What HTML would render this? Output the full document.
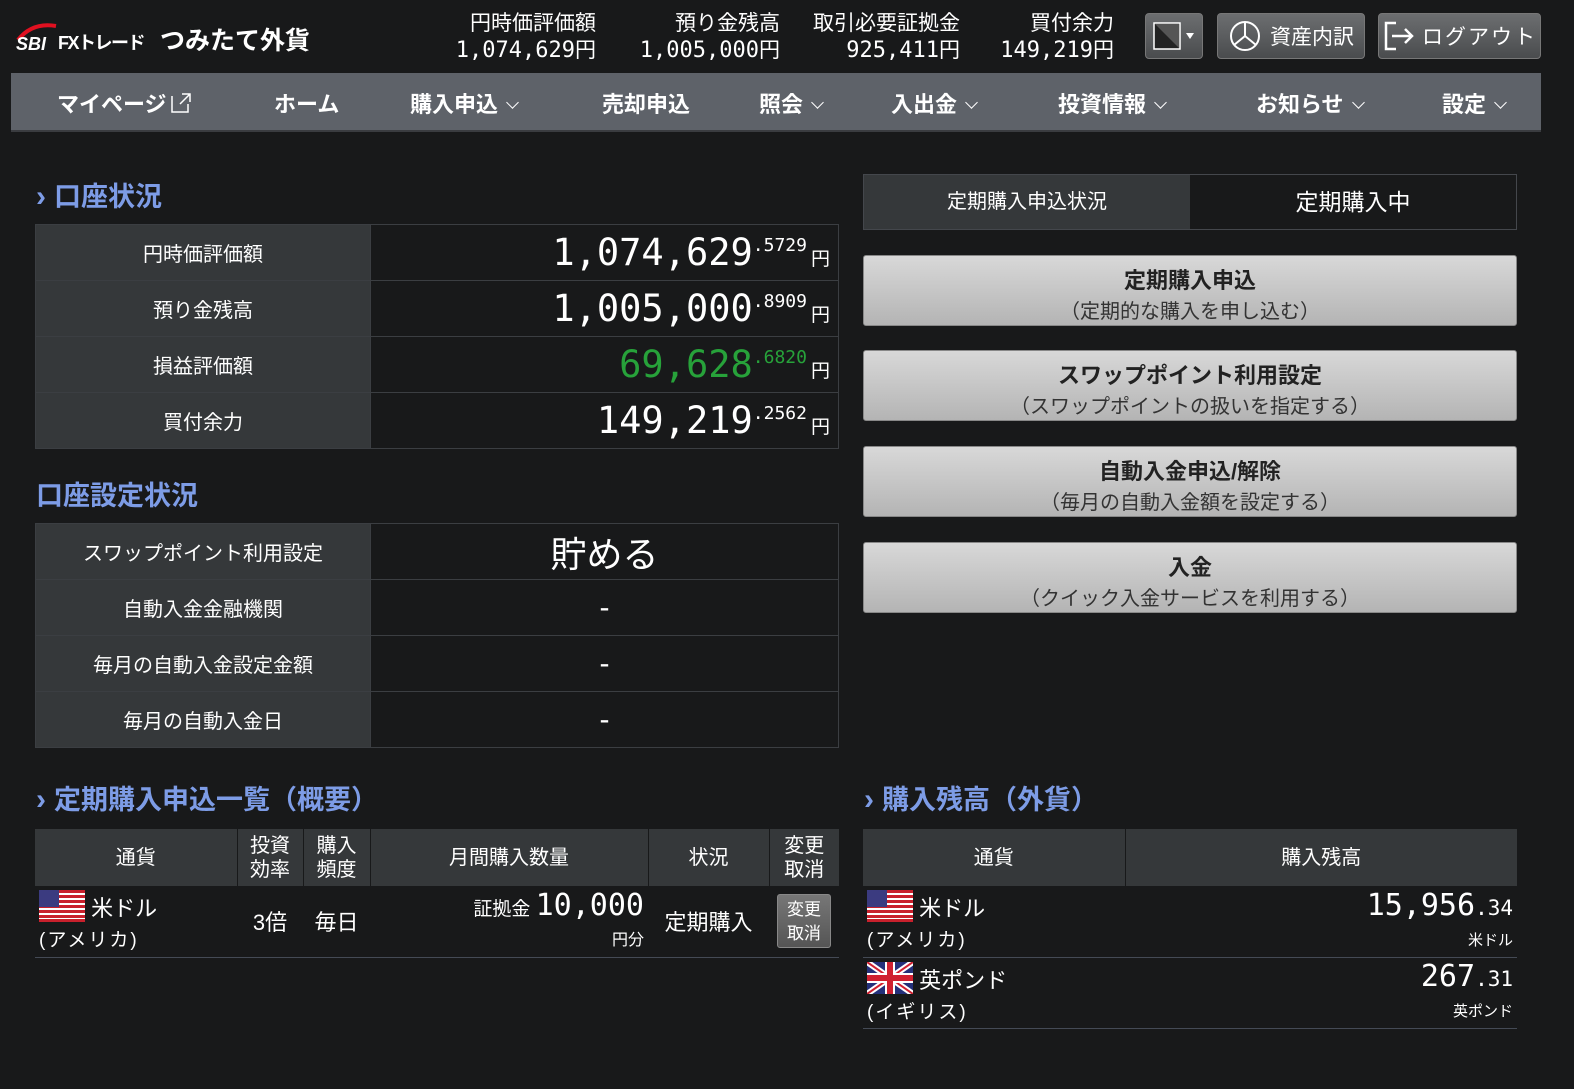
<!DOCTYPE html>
<html><head><meta charset="utf-8">
<style>
*{margin:0;padding:0;box-sizing:border-box}
body{width:1574px;height:1089px;background:#18191a;color:#fff;font-family:"Liberation Sans","Noto Sans CJK JP",sans-serif;position:relative;overflow:hidden}
.a{position:absolute}
.mono{font-family:"DejaVu Sans Mono","Noto Sans CJK JP",monospace}
.hs{text-align:right;font-size:21px;line-height:27px}
.hs .n{font-family:"DejaVu Sans Mono","Noto Sans CJK JP",monospace;font-size:22px}
.btn{background:linear-gradient(#6c6e70,#4a4c4e);border:1px solid #777;border-radius:4px;display:flex;align-items:center;justify-content:center;font-size:21px;color:#fff}
.nav{left:11px;top:73px;width:1530px;height:59px;background:#5e6269;border-bottom:2px solid #3a3c40}
.nav span{position:absolute;top:14px;font-size:22px;font-weight:bold;white-space:nowrap}
.chev{display:inline-block;width:9px;height:9px;border-right:1.5px solid #fff;border-bottom:1.5px solid #fff;transform:rotate(45deg);margin-left:10px;position:relative;top:-5px}
.h2{color:#7d9ce6;font-size:27px;font-weight:bold}
.h2 .g{font-weight:bold;margin-right:8px;font-size:30px}
table{border-collapse:collapse}
.kv{left:35px;width:804px}
.kv td{height:56px;border:1px solid #3b3e42}
.kv td.l{width:335px;background:#35383a;text-align:center;font-size:20px}
.kv td.v{background:#18191a;text-align:right;padding-right:8px;white-space:nowrap}
.big{font-family:"DejaVu Sans Mono",monospace;font-size:37px}
.sup{font-family:"DejaVu Sans Mono",monospace;font-size:18px;vertical-align:14px}
.yen{font-size:19px;margin-left:4px}
.gb{background:linear-gradient(#d8d8d8,#b4b4b4);border:1px solid #888;border-radius:3px;color:#222;text-align:center;left:863px;width:654px;height:71px}
.gb b{display:block;font-size:22px;margin-top:7px}
.gb i{display:block;font-style:normal;font-size:20px;color:#333}
.tb th{background:#35383a;font-weight:normal;font-size:20px;line-height:24px;border-right:1px solid #18191a;height:57px}
.tb td{border-bottom:1px solid #444a55;font-size:22px}
</style></head><body>

<div class="a" style="left:12px;top:20px;width:300px;height:36px">
<svg width="60" height="36" style="position:absolute;left:0;top:0"><path d="M6 20 Q20 2 44 6" stroke="#e01020" stroke-width="4" fill="none"/><text x="4" y="30" font-family="Liberation Sans" font-style="italic" font-weight="bold" font-size="18" fill="#fff">SBI</text></svg>
<span class="a" style="left:46px;top:9px;font-size:18px;font-weight:bold;letter-spacing:-1.5px">FXトレード</span>
<span class="a" style="left:148px;top:1px;font-size:25px;font-weight:bold">つみたて外貨</span>
</div>

<div class="a hs" style="left:430px;top:10px;width:166px">円時価評価額<br><span class="n">1,074,629</span>円</div>
<div class="a hs" style="left:610px;top:10px;width:170px">預り金残高<br><span class="n">1,005,000</span>円</div>
<div class="a hs" style="left:790px;top:10px;width:170px">取引必要証拠金<br><span class="n">925,411</span>円</div>
<div class="a hs" style="left:970px;top:10px;width:144px">買付余力<br><span class="n">149,219</span>円</div>

<div class="a btn" style="left:1145px;top:13px;width:58px;height:46px">
<svg width="44" height="32"><rect x="2" y="3" width="26" height="26" fill="#222" stroke="#fff" stroke-width="1.5"/><path d="M3 4 L27 28 L27 4Z" fill="#555"/><path d="M34 13 L42 13 L38 19Z" fill="#fff"/></svg></div>
<div class="a btn" style="left:1217px;top:13px;width:148px;height:46px">
<svg width="34" height="34" style="margin-right:8px"><circle cx="17" cy="17" r="14" fill="none" stroke="#fff" stroke-width="2"/><path d="M17 3 V17 L6 26 M17 17 L28 26" stroke="#fff" stroke-width="2" fill="none"/></svg>資産内訳</div>
<div class="a btn" style="left:1378px;top:13px;width:163px;height:46px;letter-spacing:2px">
<svg width="34" height="34" style="margin-right:6px"><path d="M14 4 H4 V30 H14" stroke="#fff" stroke-width="2.5" fill="none"/><path d="M10 17 H30 M23 10 L30 17 L23 24" stroke="#fff" stroke-width="2.5" fill="none"/></svg>ログアウト</div>

<div class="a nav">
<span style="left:46px">マイページ<svg width="22" height="22" style="margin-left:3px;vertical-align:-2px"><path d="M2 4 V20 H18 V12 M12 2 H20 V10 M20 2 L10 12" stroke="#fff" stroke-width="1.5" fill="none"/></svg></span>
<span style="left:263px">ホーム</span>
<span style="left:399px">購入申込<i class="chev"></i></span>
<span style="left:591px">売却申込</span>
<span style="left:748px">照会<i class="chev"></i></span>
<span style="left:880px">入出金<i class="chev"></i></span>
<span style="left:1047px">投資情報<i class="chev"></i></span>
<span style="left:1245px">お知らせ<i class="chev"></i></span>
<span style="left:1431px">設定<i class="chev"></i></span>
</div>

<div class="a h2" style="left:36px;top:175px"><span class="g">›</span>口座状況</div>
<table class="a kv" style="top:224px">
<tr><td class="l">円時価評価額</td><td class="v"><span class="big">1,074,629</span><span class="sup">.5729</span><span class="yen">円</span></td></tr>
<tr><td class="l">預り金残高</td><td class="v"><span class="big">1,005,000</span><span class="sup">.8909</span><span class="yen">円</span></td></tr>
<tr><td class="l">損益評価額</td><td class="v"><span class="big" style="color:#27a23a">69,628</span><span class="sup" style="color:#27a23a">.6820</span><span class="yen">円</span></td></tr>
<tr><td class="l">買付余力</td><td class="v"><span class="big">149,219</span><span class="sup">.2562</span><span class="yen">円</span></td></tr>
</table>

<div class="a h2" style="left:36px;top:474px">口座設定状況</div>
<table class="a kv" style="top:523px">
<tr><td class="l">スワップポイント利用設定</td><td class="v" style="text-align:center;font-size:36px;padding:0">貯める</td></tr>
<tr><td class="l">自動入金金融機関</td><td class="v" style="text-align:center;font-size:30px;padding:0">-</td></tr>
<tr><td class="l">毎月の自動入金設定金額</td><td class="v" style="text-align:center;font-size:30px;padding:0">-</td></tr>
<tr><td class="l">毎月の自動入金日</td><td class="v" style="text-align:center;font-size:30px;padding:0">-</td></tr>
</table>

<div class="a" style="left:863px;top:174px;width:654px;height:56px;border:1px solid #44474c;display:flex">
<div style="width:326px;background:#35383a;text-align:center;line-height:54px;font-size:20px">定期購入申込状況</div>
<div style="flex:1;text-align:center;line-height:54px;font-size:23px">定期購入中</div>
</div>
<div class="a gb" style="top:255px"><b>定期購入申込</b><i>（定期的な購入を申し込む）</i></div>
<div class="a gb" style="top:350px"><b>スワップポイント利用設定</b><i>（スワップポイントの扱いを指定する）</i></div>
<div class="a gb" style="top:446px"><b>自動入金申込/解除</b><i>（毎月の自動入金額を設定する）</i></div>
<div class="a gb" style="top:542px"><b>入金</b><i>（クイック入金サービスを利用する）</i></div>

<div class="a h2" style="left:36px;top:778px"><span class="g">›</span>定期購入申込一覧（概要）</div>
<table class="a tb" style="left:35px;top:829px;width:804px">
<tr><th style="width:202px">通貨</th><th style="width:66px">投資<br>効率</th><th style="width:67px">購入<br>頻度</th><th style="width:278px">月間購入数量</th><th style="width:121px">状況</th><th style="border-right:0">変更<br>取消</th></tr>
<tr style="height:71px"><td style="padding-left:4px;padding-top:4px;line-height:30px"><svg width="46" height="32" style="vertical-align:-6px"><rect width="46" height="32" fill="#fff"/><g fill="#c8202c"><rect y="0" width="46" height="3"/><rect y="5" width="46" height="3"/><rect y="10" width="46" height="3"/><rect y="15" width="46" height="3"/><rect y="20" width="46" height="3"/><rect y="25" width="46" height="3"/><rect y="29" width="46" height="3"/></g><rect width="20" height="17" fill="#3b3b80"/></svg> 米ドル<br><span style="font-size:19px;letter-spacing:2px">(アメリカ)</span></td>
<td style="text-align:center">3倍</td><td style="text-align:center">毎日</td>
<td style="text-align:right;padding-right:4px;line-height:28px;padding-top:4px"><span style="font-size:19px">証拠金 </span><span class="mono" style="font-size:30px">10,000</span><br><span style="font-size:16px">円分</span></td>
<td style="text-align:center">定期購入</td>
<td style="text-align:center"><div style="display:inline-block;width:54px;height:54px;background:linear-gradient(#777,#555);border:1px solid #888;border-radius:3px;font-size:17px;line-height:24px;padding-top:3px">変更<br>取消</div></td></tr>
</table>

<div class="a h2" style="left:864px;top:778px"><span class="g">›</span>購入残高（外貨）</div>
<table class="a tb" style="left:863px;top:829px;width:654px">
<tr><th style="width:262px">通貨</th><th style="border-right:0">購入残高</th></tr>
<tr style="height:71px"><td style="padding-left:4px;padding-top:4px;line-height:30px"><svg width="46" height="32" style="vertical-align:-6px"><rect width="46" height="32" fill="#fff"/><g fill="#c8202c"><rect y="0" width="46" height="3"/><rect y="5" width="46" height="3"/><rect y="10" width="46" height="3"/><rect y="15" width="46" height="3"/><rect y="20" width="46" height="3"/><rect y="25" width="46" height="3"/><rect y="29" width="46" height="3"/></g><rect width="20" height="17" fill="#3b3b80"/></svg> 米ドル<br><span style="font-size:19px;letter-spacing:2px">(アメリカ)</span></td>
<td style="text-align:right;padding-right:4px;padding-top:4px;line-height:30px"><span class="mono" style="font-size:30px">15,956</span><span class="mono" style="font-size:21px">.34</span><br><span style="font-size:15px">米ドル</span></td></tr>
<tr style="height:71px"><td style="padding-left:4px;padding-top:4px;line-height:30px"><svg width="46" height="32" style="vertical-align:-6px"><rect width="46" height="32" fill="#24307a"/><path d="M0 0 L46 32 M46 0 L0 32" stroke="#fff" stroke-width="6"/><path d="M0 0 L46 32 M46 0 L0 32" stroke="#d02030" stroke-width="2"/><path d="M23 0 V32 M0 16 H46" stroke="#fff" stroke-width="10"/><path d="M23 0 V32 M0 16 H46" stroke="#d02030" stroke-width="6"/></svg> 英ポンド<br><span style="font-size:19px;letter-spacing:2px">(イギリス)</span></td>
<td style="text-align:right;padding-right:4px;padding-top:4px;line-height:30px"><span class="mono" style="font-size:30px">267</span><span class="mono" style="font-size:21px">.31</span><br><span style="font-size:15px">英ポンド</span></td></tr>
</table>
</body></html>
